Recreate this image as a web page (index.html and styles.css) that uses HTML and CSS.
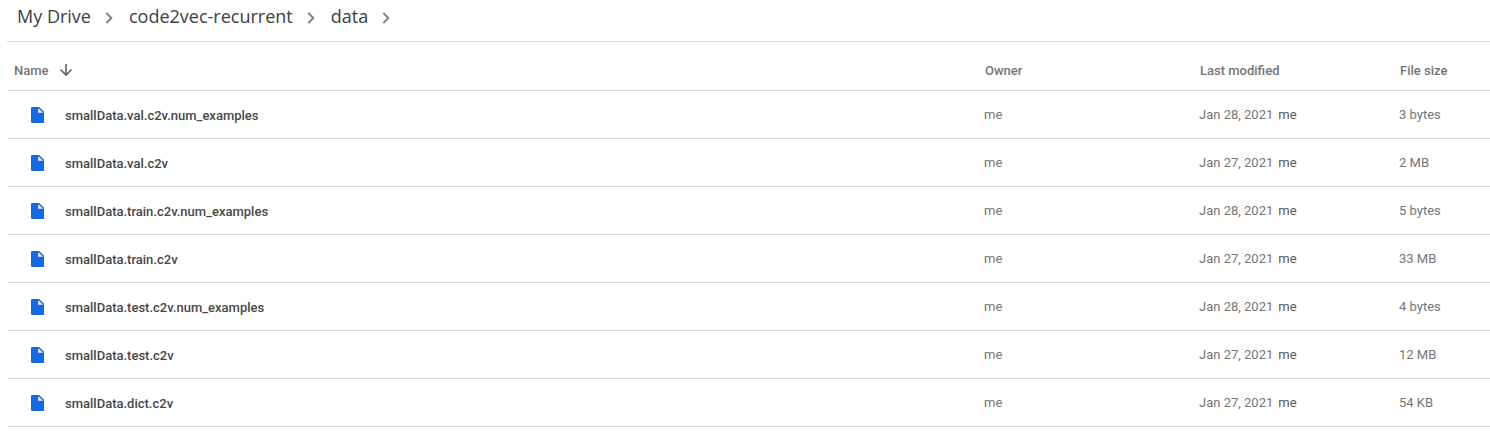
FILE: index.html
```html
<!DOCTYPE html>
<html lang="en">
<head>
<meta charset="utf-8">
<title>data - My Drive</title>
<link rel="stylesheet" href="styles.css">
</head>
<body>
<svg class="defs" aria-hidden="true">
  <symbol id="chevron" viewBox="0 0 8 12"><path d="M1.300 .900 6.300 6 1.300 11.100" fill="none" stroke="currentColor" stroke-width="2"/></symbol>
  <symbol id="file" viewBox="0 0 14 16"><path fill="#1967e8" d="M1.200 0H8.200L13 4.800V14.800Q13 16 11.800 16H1.200Q0 16 0 14.800V1.200Q0 0 1.200 0Z"/><path fill="#fff" d="M7.200 1.200V5.800H11.800Z"/></symbol>
</svg>
<nav class="crumbs" aria-label="Breadcrumb">
  <a class="crumb" href="#">My Drive</a><svg class="chevron"><use href="#chevron"/></svg>
  <a class="crumb" href="#">code2vec-recurrent</a><svg class="chevron"><use href="#chevron"/></svg>
  <a class="crumb" href="#">data</a><svg class="chevron"><use href="#chevron"/></svg>
</nav>
<main class="listing">
<table class="files">
  <colgroup><col><col class="col-owner"><col class="col-modified"><col class="col-size"></colgroup>
  <thead>
    <tr><th scope="col"><button class="sort" type="button">Name<svg class="arrow" viewBox="0 0 14 14"><path d="M7 1V12M1.500 6.500 7 12 12.500 6.500" fill="none" stroke="currentColor" stroke-width="1.600"/></svg></button></th><th scope="col">Owner</th><th scope="col">Last modified</th><th scope="col">File size</th></tr>
  </thead>
  <tbody>
    <tr><td><div class="name"><svg class="file"><use href="#file"/></svg>smallData.val.c2v.num_examples</div></td><td>me</td><td>Jan 28, 2021<span class="by">me</span></td><td>3 bytes</td></tr>
    <tr><td><div class="name"><svg class="file"><use href="#file"/></svg>smallData.val.c2v</div></td><td>me</td><td>Jan 27, 2021<span class="by">me</span></td><td>2 MB</td></tr>
    <tr><td><div class="name"><svg class="file"><use href="#file"/></svg>smallData.train.c2v.num_examples</div></td><td>me</td><td>Jan 28, 2021<span class="by">me</span></td><td>5 bytes</td></tr>
    <tr><td><div class="name"><svg class="file"><use href="#file"/></svg>smallData.train.c2v</div></td><td>me</td><td>Jan 27, 2021<span class="by">me</span></td><td>33 MB</td></tr>
    <tr><td><div class="name"><svg class="file"><use href="#file"/></svg>smallData.test.c2v.num_examples</div></td><td>me</td><td>Jan 28, 2021<span class="by">me</span></td><td>4 bytes</td></tr>
    <tr><td><div class="name"><svg class="file"><use href="#file"/></svg>smallData.test.c2v</div></td><td>me</td><td>Jan 27, 2021<span class="by">me</span></td><td>12 MB</td></tr>
    <tr><td><div class="name"><svg class="file"><use href="#file"/></svg>smallData.dict.c2v</div></td><td>me</td><td>Jan 27, 2021<span class="by">me</span></td><td>54 KB</td></tr>
  </tbody>
</table>
</main>
</body>
</html>
```
FILE: styles.css
```css
* { box-sizing: border-box; }
body { margin: 0; background: #fff; font: 13px/16px Roboto, Arial, sans-serif; color: #757575; }
.defs { position: absolute; width: 0; height: 0; }
.crumbs { display: flex; align-items: center; height: 42px; margin-left: 7px; padding: 0 0 10px 10px; border-bottom: 1px solid #dadada; }
.crumb { font: 18px/24px "Open Sans", Roboto, sans-serif; color: #3c4043; text-decoration: none; }
.chevron { width: 8px; height: 12px; margin: 4px 16px 0 14px; color: #808080; }
.listing { padding-left: 8px; }
.files { width: 100%; table-layout: fixed; border-collapse: separate; border-spacing: 0; }
.col-owner { width: 215px; }
.col-modified { width: 200px; }
.col-size { width: 91px; }
th, td { padding: 0; text-align: left; border-bottom: 1px solid #dadada; }
th { height: 49px; padding: 10px 0 0 1px; font-weight: 500; }
th:first-child { padding-left: 6px; }
td { height: 48px; }
.sort { display: flex; align-items: center; gap: 10px; padding: 0; border: 0; background: none; font: inherit; color: inherit; }
.arrow { width: 14px; height: 14px; margin-bottom: 2px; color: #5f6368; }
.name { display: flex; align-items: center; padding: 2px 0 0 23px; font-weight: 500; color: #484848; }
.file { width: 14px; height: 16px; margin: 0 20px 2px 0; }
.by { margin-left: 5px; color: #55585d; }
```
